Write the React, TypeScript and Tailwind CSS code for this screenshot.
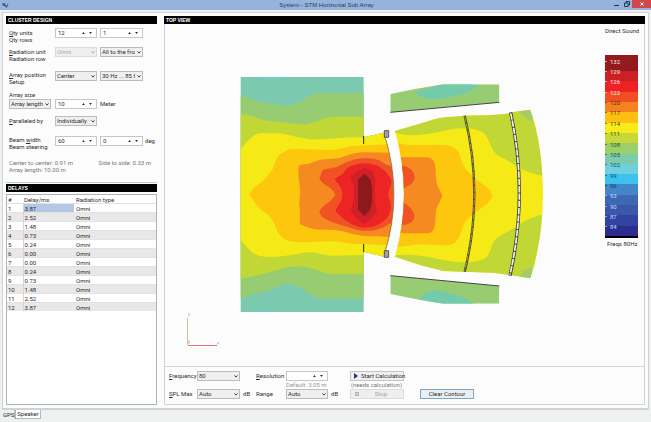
import React from 'react';

const delays = ['3.87', '2.52', '1.48', '0.73', '0.24', '0.00', '0.00', '0.24', '0.73', '1.48', '2.52', '3.87'];

const levels = [
  { db: 132, style: 'text-red-100' },
  { db: 129, style: 'text-red-100' },
  { db: 126, style: 'text-red-100' },
  { db: 123, style: 'text-red-100' },
  { db: 120, style: 'text-[#5a2a10]' },
  { db: 117, style: 'text-[#5a4010]' },
  { db: 114, style: 'text-[#4a4a10]' },
  { db: 111, style: 'text-[#4a4a10]' },
  { db: 108, style: 'text-[#2f5020]' },
  { db: 105, style: 'text-[#1f5040]' },
  { db: 102, style: 'text-[#1f5060]' },
  { db: 99, style: 'text-[#10506a]' },
  { db: 96, style: 'text-[#103a6a]' },
  { db: 93, style: 'text-blue-200' },
  { db: 90, style: 'text-blue-200' },
  { db: 87, style: 'text-blue-200' },
  { db: 84, style: 'text-blue-200' },
];

const bands = [
  { h: 'h-[16px]', color: 'bg-[#931b1d]' },
  { h: 'flex-1', color: 'bg-[#cb2026]' },
  { h: 'flex-1', color: 'bg-[#ed2224]' },
  { h: 'flex-1', color: 'bg-[#f04e25]' },
  { h: 'flex-1', color: 'bg-[#f58220]' },
  { h: 'flex-1', color: 'bg-[#fdc010]' },
  { h: 'flex-1', color: 'bg-[#f8ec18]' },
  { h: 'flex-1', color: 'bg-[#c6d938]' },
  { h: 'flex-1', color: 'bg-[#9bcf6c]' },
  { h: 'flex-1', color: 'bg-[#7ccbaa]' },
  { h: 'flex-1', color: 'bg-[#70cfdc]' },
  { h: 'flex-1', color: 'bg-[#3cc2f0]' },
  { h: 'flex-1', color: 'bg-[#4485c8]' },
  { h: 'flex-1', color: 'bg-[#3c68b4]' },
  { h: 'flex-1', color: 'bg-[#3a57a8]' },
  { h: 'flex-1', color: 'bg-[#3242a0]' },
  { h: 'flex-1', color: 'bg-[#2b2e90]' },
  { h: 'h-[2px]', color: 'bg-black' },
];

function Header({ children }: { children: React.ReactNode }) {
  return <h2 className="h-[8px] bg-black pl-[2px] font-['Liberation_Sans',Arial,sans-serif] text-[5px] leading-[8px] font-bold text-white">{children}</h2>;
}

function Drop({ label, value, disabled }: { label: string; value: string; disabled?: boolean }) {
  return (
    <div className="relative h-[10px]">
      <select
        aria-label={label}
        disabled={disabled}
        className="block h-full w-full appearance-none border border-[#bcbcbc] bg-[#efefef] pr-[7px] pl-[1px] text-[6px] leading-[8px] disabled:border-[#dadada] disabled:text-[#a8a8a8]"
      >
        <option>{value}</option>
      </select>
      <svg viewBox="0 0 5 4" className={`pointer-events-none absolute top-[4px] right-[2px] h-[3px] w-[4px] ${disabled ? 'opacity-40' : ''}`}>
        <path d="M.5 .5 2.5 2.8 4.5 .5" fill="none" stroke="#333" strokeWidth="1.2" />
      </svg>
    </div>
  );
}

function Spin({ label, value }: { label: string; value: string }) {
  return (
    <div className="flex h-[10px] items-center border border-[#c6c6c6] bg-white pr-[2px]">
      <input aria-label={label} defaultValue={value} className="h-[8px] w-0 min-w-0 flex-1 bg-transparent pl-[2px] text-[6px] leading-[8px] outline-none" />
      <button type="button" aria-label={`Increase ${label}`} className="flex h-[8px] w-[7px] items-center justify-center">
        <svg viewBox="0 0 4 3" className="h-[2px] w-[3px]"><path d="M0 3 2 0 4 3Z" fill="#222" /></svg>
      </button>
      <button type="button" aria-label={`Decrease ${label}`} className="flex h-[8px] w-[7px] items-center justify-center">
        <svg viewBox="0 0 4 3" className="h-[2px] w-[3px]"><path d="M0 0H4L2 3Z" fill="#222" /></svg>
      </button>
    </div>
  );
}

function Hot({ letter, rest }: { letter: string; rest: string }) {
  return (
    <span>
      <u className="underline-offset-1">{letter}</u>
      {rest}
    </span>
  );
}

const formRow = 'grid grid-cols-[45px_42px_45px_1fr] items-start gap-x-[1px] [&>*:nth-child(3)]:ml-[2px]';

function Cluster() {
  return (
    <section>
      <Header>CLUSTER DESIGN</Header>
      <form className="h-[159px] border-b border-[#c8c8c8] pt-[4px] pl-[3px] leading-[7px]">
        <div className={`${formRow} h-[19px]`}>
          <div className="flex flex-col pt-[1px]"><Hot letter="Q" rest="ty units" /><span>Qty rows</span></div>
          <Spin label="Qty units" value="12" />
          <Spin label="Qty rows" value="1" />
        </div>
        <div className={`${formRow} h-[24px]`}>
          <div className="flex flex-col pt-[1px]"><Hot letter="R" rest="adiation unit" /><span>Radiation row</span></div>
          <Drop label="Radiation unit" value="Omni" disabled />
          <Drop label="Radiation row" value="All to the front" />
        </div>
        <div className={`${formRow} h-[20px]`}>
          <div className="flex flex-col"><Hot letter="A" rest="rray position" /><span>Setup</span></div>
          <Drop label="Array position" value="Center" />
          <Drop label="Setup" value="30 Hz ... 85 Hz" />
        </div>
        <div className="h-[8px]">Array size</div>
        <div className={`${formRow} h-[17px]`}>
          <div className="pr-[3px]"><Drop label="Array size" value="Array length" /></div>
          <Spin label="Array length" value="10" />
          <span className="pt-[1px]">Meter</span>
        </div>
        <div className={`${formRow} h-[20px]`}>
          <span className="pt-[1px]"><Hot letter="P" rest="aralleled by" /></span>
          <Drop label="Paralleled by" value="Individually" />
        </div>
        <div className={`${formRow} h-[23px]`}>
          <div className="flex flex-col"><span>Beam <u>w</u>idth</span><span>Beam steering</span></div>
          <Spin label="Beam width" value="60" />
          <Spin label="Beam steering" value="0" />
          <span className="pt-[1px] pl-[1px]">deg</span>
        </div>
        <div className="flex justify-between pr-[6px] text-[#777]">
          <span>Center to center: 0.91 m</span>
          <span>Side to side: 0.33 m</span>
        </div>
        <div className="text-[#777]">Array length: 10.00 m</div>
      </form>
    </section>
  );
}

function Delays() {
  return (
    <section className="mt-[1px] flex flex-1 flex-col">
      <Header>DELAYS</Header>
      <div className="mt-[2px] flex-1 border border-[#a9b4bc] bg-white pt-[1px]">
        <table className="h-[115px] w-full table-fixed border-collapse leading-[7px]">
          <colgroup><col className="w-[16px]" /><col className="w-[51px]" /><col /></colgroup>
          <thead>
            <tr className="text-left"><th className="pl-[1px] font-normal">#</th><th className="pl-[1px] font-normal">Delay/ms</th><th className="pl-[2px] font-normal">Radiation type</th></tr>
          </thead>
          <tbody>
            {delays.map((d, i) => (
              <tr key={i} className="border-t border-[#e2e2e2] even:bg-[#e9e7e7]">
                <td className="border-r border-[#d5d5d5] p-0 pl-[1px]">{i + 1}</td>
                <td className={i === 0 ? 'bg-[#b3c7e6] p-0 pl-[1px]' : 'p-0 pl-[1px]'}>{d}</td>
                <td className="p-0 pl-[2px]">Omni</td>
              </tr>
            ))}
          </tbody>
        </table>
      </div>
    </section>
  );
}

function Plot() {
  return (
    <svg viewBox="165 24 433 342" preserveAspectRatio="xMinYMin meet" className="h-[342px] min-w-0 flex-1" role="img" aria-label="Sound pressure contour">
      <defs>
        <clipPath id="rear"><path d="M31 21H401V202L462 188 Q520 373 462 560L401 545V726H31Z" /></clipPath>
        <clipPath id="front"><path d="M105 183 L200 155 Q240 140 280 140 L310 137 L380 136 L430 133 Q480 122 511 120 Q547 220 549 372 Q548 510 511 625 L470 618 L400 608 L310 605 L250 603 L180 585 L105 560 Q159 372 105 183Z" /></clipPath>
        <clipPath id="wingTop"><path d="M91 72 L170 56 L250 43H418V97L91 127Z" /></clipPath>
        <clipPath id="wingBottom"><path d="M91 617 L418 648V701H250L170 688L91 672Z" /></clipPath>
      </defs>
      <g transform="translate(230 70) scale(0.33333)">
        <g clipPath="url(#rear)">
          <path d="M31 21H520V726H31Z" fill="#7bcab0" />
          <path d="M78 21 H162 C140 32 95 30 78 21Z M80 726 C95 718 118 716 132 726Z" fill="#74cbc6" />
          <path d="M31 75 C60 85 85 97 110 99 C140 103 160 112 190 104 C220 95 240 70 265 69 H520 V686 H270 C240 680 220 648 175 642 C145 642 130 662 90 668 C60 672 50 684 31 685Z" fill="#98cc72" />
          <path d="M31 133 C60 133 90 150 120 153 C160 154 190 166 230 162 C260 157 280 143 310 140 H520 V612 H300 C270 607 250 590 200 589 C155 591 130 607 100 612 C65 618 50 625 31 625Z" fill="#c1d735" />
          <path d="M31 240 C45 225 60 194 90 190 H150 C180 194 210 206 240 208 C300 210 320 202 401 202 L520 170 V580 L401 555 L300 557 C260 550 240 540 200 553 C150 560 100 568 70 550 C50 532 40 520 31 508Z" fill="#f6ea16" />
          <path d="M57 373 L75 350 L100 332 L128 298 C136 265 150 246 180 238 C220 235 260 240 300 240 C330 240 350 226 401 226 L520 222 V528 L401 522 C350 524 330 512 300 514 L220 517 C180 516 160 512 145 490 C132 455 122 435 98 423 C80 410 70 390 57 373Z" fill="#fdc70e" />
          <path d="M206 290 C210 280 230 285 240 280 L270 269 L330 264 C350 257 370 248 401 247 L520 249 V502 C430 500 380 500 350 487 C320 476 280 482 250 477 C230 470 215 466 209 462 Q212 430 207 400 Q213 370 208 340 Q204 315 206 290Z" fill="#f48a20" />
          <path d="M268 325 L278 299 L320 291 C340 282 360 268 400 265 C430 263 450 269 465 282 L520 302 V450 L476 462 C450 484 410 486 380 479 C340 465 310 462 275 440 L268 425 C275 405 303 398 316 374 C303 346 280 350 268 325Z" fill="#f05225" />
          <path d="M313 327 L338 312 C350 290 370 283 401 280 C440 280 462 295 478 320 C492 335 478 352 474 373 C478 395 492 410 474 440 C452 466 430 472 401 473 C370 470 345 452 328 435 L316 422 C325 405 336 395 337 375 C336 350 325 345 313 327Z" fill="#ed2424" />
          <path d="M361 323 L378 305 L403 293 L425 302 L437 330 L434 355 V390 L441 425 L425 446 L403 463 L378 442 L362 424 L372 390 V350Z" fill="#d02027" />
          <path d="M403 311 L421 328 L426 350 V400 L420 420 L403 438 L384 418 V330Z" fill="#8c1a1c" />
        </g>
        <path d="M401 198V222M401 522V546" stroke="#222" strokeWidth="3" />
        <path d="M464 198 Q520 373 464 548" fill="none" stroke="#7c6258" strokeWidth="2" />
        <path d="M463 182h13v20h-13zM463 542h13v20h-13z" fill="#a49ea2" stroke="#5a565a" strokeWidth="3" />
      </g>
      <g transform="translate(360 70) scale(0.33333)">
        <g clipPath="url(#front)">
          <path d="M100 110H560V640H100Z" fill="#f6ea16" />
          <path d="M105 188 C150 200 190 196 230 187 C290 172 345 168 372 190 C395 215 390 245 420 260 C450 270 490 315 560 318 V100H105Z M105 556 C160 550 200 560 240 568 C290 580 345 582 375 565 C400 545 385 520 420 497 C470 475 495 440 560 432 V640H105Z" fill="#c1d735" />
          <path d="M477 120H520L516 152Q485 142 477 120Z M477 626H520L514 590Q485 600 477 626Z" fill="#a3cd6c" />
          <path d="M100 215 C150 230 180 224 220 225 C265 222 290 232 298 250 C305 275 310 295 335 315 C355 340 388 345 398 377 C390 403 350 420 330 440 C300 465 310 500 280 521 C260 530 220 524 180 523 L100 532Z" fill="#fdc70e" />
          <path d="M100 262 H200 C225 265 224 280 227 300 C227 350 236 352 247 375 C240 402 228 405 227 435 C225 475 222 490 200 490 H100Z" fill="#f48a20" />
          <path d="M115 284 C145 288 165 300 164 325 C160 348 135 345 125 365Z M125 390 C135 405 160 412 163 437 C165 457 145 464 115 467Z" fill="#f05225" />
        </g>
        <path d="M314 137 Q372 371 314 605" fill="none" stroke="#4a4828" strokeWidth="7" />
        <path d="M314 140 Q372 371 314 602" fill="none" stroke="#a8a038" strokeWidth="3" strokeDasharray="17 4" />
        <path d="M452 127 Q505 371 450 617" fill="none" stroke="#45453a" strokeWidth="10" />
        <path d="M452 130 Q505 371 450 614" fill="none" stroke="#f4f3e4" strokeWidth="5" strokeDasharray="19 3" />
        <g clipPath="url(#wingTop)">
          <path d="M90 40H420V130H90Z" fill="#98cc72" />
          <path d="M165 66 C190 62 220 50 250 40H330L354 48C335 68 300 76 270 80 C220 94 180 86 165 66Z" fill="#74cbac" />
        </g>
        <g clipPath="url(#wingBottom)">
          <path d="M90 610H420V705H90Z" fill="#98cc72" />
          <path d="M178 688 C190 665 215 658 245 663 C280 672 320 680 345 705H200Z" fill="#74cbac" />
        </g>
        <path d="M91 127L418 97M91 617L418 648" stroke="#444" strokeWidth="3" />
      </g>
      <path d="M187.500 318V345" stroke="#b5cf9a" />
      <path d="M188 345.500H217" stroke="#e8707c" />
      <path d="M188 313l1 1.500 1-1.500M189 314.500v2M217 342l2 2.500M219 342l-2 2.500M188 341h2l-2 2h2" fill="none" stroke="#aaa" strokeWidth=".6" />
    </svg>
  );
}

function Scale() {
  return (
    <aside className="flex w-[46px] shrink-0 flex-col pt-[3px] pl-[7px]">
      <div className="h-[28px] leading-[7px] whitespace-nowrap">Direct Sound</div>
      <div className="grid h-[183px] w-[33px]">
        <div className="col-start-1 row-start-1 flex flex-col">
          {bands.map((b, i) => <div key={i} className={`${b.h} ${b.color}`} />)}
        </div>
        <ol className="col-start-1 row-start-1 flex flex-col pt-[1px] pb-[6px]">
          {levels.map((l) => (
            <li key={l.db} className={`flex flex-1 items-center gap-[3px] ${l.style}`}>
              <span className="h-px w-[2px] bg-current opacity-70" />
              {l.db}
            </li>
          ))}
        </ol>
      </div>
      <div className="mt-[2px] pl-[2px] leading-[7px] whitespace-nowrap">Freqs 80Hz</div>
    </aside>
  );
}

function Controls() {
  return (
    <form className="grid h-[38px] grid-cols-[28px_43px_16px_30px_42px_22px_54px_16px_54px] grid-rows-[18px_11px] items-start border-t border-[#d4d4d4] pt-[4px] pl-[4px] leading-[10px]">
      <Hot letter="F" rest="requency" />
      <Drop label="Frequency" value="80" />
      <span />
      <Hot letter="R" rest="esolution" />
      <div className="whitespace-nowrap">
        <Spin label="Resolution" value="" />
        <div className="leading-[7px] text-[#999]">Default: 3.05 m</div>
      </div>
      <span />
      <div className="whitespace-nowrap">
        <button type="button" className="flex h-[10px] w-full items-center border border-[#c4c4c4] bg-[#f0f0f0] pl-[3px] leading-[8px]">
          <svg viewBox="0 0 4 6" className="mr-[3px] h-[6px] w-[4px] shrink-0"><path d="M0 0 4 3 0 6Z" fill="#1e3a6e" /></svg>
          Start Calculation
        </button>
        <div className="pl-[1px] leading-[7px] text-[#777]">(needs calculation)</div>
      </div>
      <span />
      <span />
      <Hot letter="S" rest="PL Max" />
      <Drop label="SPL Max" value="Auto" />
      <span className="pl-[3px]">dB</span>
      <span>Range</span>
      <Drop label="Range" value="Auto" />
      <span className="pl-[3px]">dB</span>
      <button type="button" disabled className="flex h-[10px] items-center border border-[#dcdcdc] bg-[#efefef] pl-[4px] leading-[8px] text-[#a0a0a0]">
        <span className="h-[4px] w-[4px] border border-[#b4b4b4] bg-[#d4d4d4]" />
        <span className="flex-1 text-center">Stop</span>
      </button>
      <span />
      <button type="button" className="h-[10px] border border-[#7fa6c4] bg-[#eaeff3] leading-[8px]">Clear Contour</button>
    </form>
  );
}

export default function App() {
  return (
    <div className="flex min-h-screen flex-col bg-[#eff1f1] font-['Roboto',Arial,sans-serif] text-[6px] leading-[7px] text-[#2c2c2c]">
      <header className="flex h-[10px] items-start bg-[#95b3dd]">
        <div className="flex flex-1 pt-[2px] pl-[2px]">
          <svg viewBox="0 0 8 6" className="h-[6px] w-[7px]"><path d="M0 1h4l1 2 2-2v3L5 6 3 4H1Z" fill="#3e6672" /><path d="M4 2l2 1" stroke="#d6e6e0" /></svg>
        </div>
        <h1 className="font-['Liberation_Sans',Arial,sans-serif] leading-[10px] text-[#2c3c56]">System - STM Horizontal Sub Array</h1>
        <div className="flex flex-1 justify-end">
          <button aria-label="Minimize" className="flex h-[8px] w-[12px] items-center justify-center"><span className="mt-[3px] h-px w-[5px] bg-[#24344e]" /></button>
          <button aria-label="Restore" className="flex h-[8px] w-[10px] items-center justify-center">
            <svg viewBox="0 0 6 6" className="h-[6px] w-[6px]"><path d="M2 2V.5H5.500V4H4M.5 2H4V5.500H.5Z" fill="none" stroke="#24344e" /></svg>
          </button>
          <button aria-label="Close" className="flex h-[8px] w-[19px] items-center justify-center bg-[#d0484c]">
            <svg viewBox="0 0 4 4" className="h-[4px] w-[4px]"><path d="M.5 .5 3.500 3.500M3.500 .5 .5 3.500" stroke="white" /></svg>
          </button>
        </div>
      </header>
      <main className="mx-[2px] mt-[2px] flex flex-1 gap-[7px] border border-b-2 border-[#cfd3d5] bg-[#fcfcfc] px-[3px] pt-[3px] pb-[3px]">
        <div className="flex w-[151px] shrink-0 flex-col"><Cluster /><Delays /></div>
        <div className="flex min-w-0 flex-1 flex-col">
          <Header>TOP VIEW</Header>
          <div className="flex flex-1 flex-col border border-t-0 border-[#d0d4d8]">
            <div className="flex flex-1"><Plot /><Scale /></div>
            <Controls />
          </div>
        </div>
      </main>
      <nav className="flex h-[13px] items-start pl-[3px] leading-[8px]">
        <button className="h-[9px] w-[12px] border-r border-[#b8b8b8] text-left">GPS</button>
        <button className="h-[9px] w-[26px] border border-t-0 border-[#b8b8b8] bg-white text-center">Speaker</button>
      </nav>
    </div>
  );
}
